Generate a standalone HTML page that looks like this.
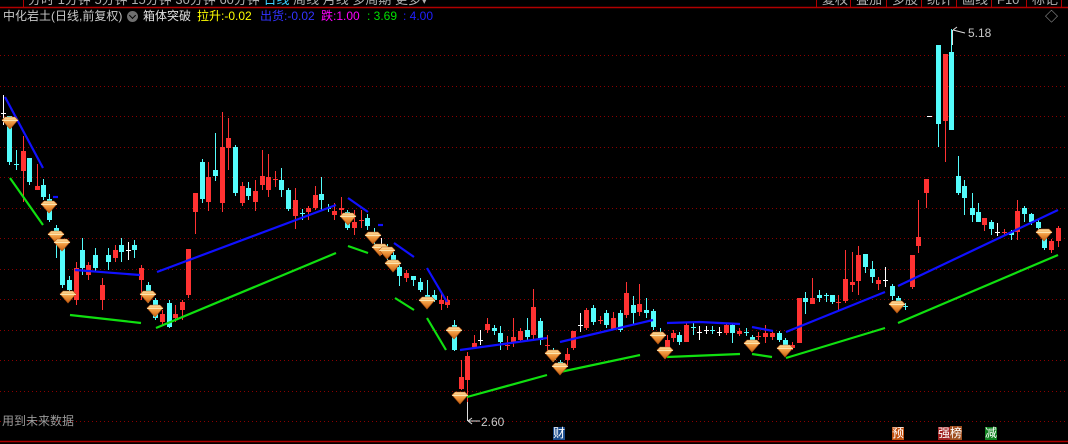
<!DOCTYPE html>
<html><head><meta charset="utf-8">
<style>
html,body{margin:0;padding:0;background:#000;overflow:hidden}
#w{position:relative;width:1068px;height:444px;background:#000;font-family:"Liberation Sans","Noto Sans CJK SC",sans-serif}
.t{position:absolute;white-space:nowrap;font-size:12px;line-height:14px}
</style></head><body><div id="w">
<svg id="s" width="1068" height="444" style="position:absolute;left:0;top:0"></svg>
<div class="t" style="left:3px;top:9px;color:#c8c8c8">中化岩土(日线,前复权)</div>
<div style="position:absolute;left:127px;top:11px;width:11px;height:11px;border-radius:50%;background:#707070"></div>
<div style="position:absolute;left:130px;top:13px;width:4px;height:4px;border-right:1.5px solid #000;border-bottom:1.5px solid #000;transform:rotate(45deg)"></div>
<div class="t" style="left:143px;top:9px;color:#e0e0e0">箱体突破</div>
<div class="t" style="left:197px;top:9px;color:#ffff00">拉升:-0.02</div>
<div class="t" style="left:260px;top:9px;color:#3333ff">出货:-0.02</div>
<div class="t" style="left:321px;top:9px;color:#ff00ff">跌:1.00</div>
<div class="t" style="left:367px;top:9px;color:#00e000">: 3.69</div>
<div class="t" style="left:403px;top:9px;color:#2020ff">: 4.00</div>
<div class="t" style="left:2px;top:414px;color:#9a9a9a;font-size:12px">用到未来数据</div>
<div class="t" style="left:481px;top:415px;color:#c8c8c8">2.60</div>
<div class="t" style="left:968px;top:26px;color:#c8c8c8">5.18</div>
<div class="t" style="left:553px;top:427px;color:#fff;background:#1a4a8a;font-size:12px;line-height:13px">财</div>
<div class="t" style="left:892px;top:427px;color:#fff;background:#c05010;font-size:12px;line-height:13px">预</div>
<div class="t" style="left:938px;top:427px;color:#fff;background:#a02020;font-size:12px;line-height:13px">强<span style="background:#a05020">榜</span></div>
<div class="t" style="left:985px;top:427px;color:#fff;background:#108020;font-size:12px;line-height:13px">减</div>
<div class="t" style="left:1045px;top:10px;color:#aaa;font-size:13px">◇</div>
</div>
<script>
var s=document.getElementById('s'),h='';
function L(x1,y1,x2,y2,c,w,d){h+='<line x1="'+x1+'" y1="'+y1+'" x2="'+x2+'" y2="'+y2+'" stroke="'+c+'" stroke-width="'+(w||1)+'"'+(d?' stroke-dasharray="'+d+'"':'')+'/>';}
function R(x,y,w,hh,c){h+='<rect x="'+x+'" y="'+y+'" width="'+w+'" height="'+hh+'" fill="'+c+'"/>';}
// top menu strip
R(0,0,1068,7,'#000');L(0,7.5,1068,7.5,'#b00000',1.5);L(23.5,0,23.5,7,'#b00000');
h+='<text x="28" y="4" fill="#b0b0b0" font-size="13" font-family="Liberation Sans,Noto Sans CJK SC,sans-serif">分时  1分钟  5分钟  15分钟  30分钟  60分钟  <tspan fill="#40d0ff">日线</tspan>  周线  月线  多周期  更多▾</text>';
var rx=[816,850,886,921,956,991,1026,1061];
for(var i=0;i<rx.length;i++){L(rx[i]+.5,0,rx[i]+.5,7,'#b00000');}
var rl=['复权','叠加','多股','统计','画线','F10','标记'];
for(i=0;i<rl.length;i++)h+='<text x="'+(rx[i]+6)+'" y="4" fill="#b0b0b0" font-size="13" font-family="Liberation Sans,Noto Sans CJK SC,sans-serif">'+rl[i]+'</text>';
// grid
for(var k=0;k<13;k++){var y=Math.round(55+30.5*k)+.5;L(0,y,1068,y,'#8a0000',1,'1 3');}
L(0,441.5,1068,441.5,'#b00000',1.5);
// candles: x,bt,bb,wt,wb,c
var C={c:'#54fcfc',r:'#ff3232',w:'#ffffff'};
var d=`3,113,113,95,125,w;9,116,162,116,165,c;16,164,164,150,170,c;23,151,171,136,202,r;29,158,182,158,185,c;37,186,190,164,190,r;43,185,197,179,200,c;49,199,220,194,222,c;56,228,240,225,258,c;62,242,285,240,288,c;69,280,290,276,294,c;76,268,300,262,305,r;82,250,268,238,275,c;88,265,275,262,280,r;95,255,268,248,272,c;102,285,300,278,310,r;108,255,262,248,270,c;115,250,258,245,262,r;121,245,252,238,262,c;128,250,250,242,260,w;134,245,250,240,258,c;141,268,280,265,300,r;148,285,300,282,303,c;155,300,318,298,320,c;162,314,322,310,325,r;169,303,327,300,328,c;175,314,318,305,322,r;182,302,310,300,320,r;188,249,295,249,298,r;195,193,212,193,234,r;202,162,199,159,203,c;208,177,202,162,211,r;215,170,176,133,181,c;222,147,203,112,212,r;228,138,148,118,170,r;235,147,193,145,196,c;242,186,203,182,206,r;248,188,196,182,200,c;255,191,202,180,211,r;262,176,185,150,190,r;268,177,190,154,197,r;275,179,179,171,187,r;281,180,190,168,197,c;288,190,209,188,211,c;295,200,216,188,229,r;302,213,213,209,220,c;308,208,212,206,220,r;315,195,208,186,210,r;321,194,200,177,210,c;328,208,208,204,212,c;334,211,215,203,220,r;341,208,210,197,218,r;347,212,228,210,230,c;354,222,228,210,235,r;361,220,220,210,228,r;367,218,226,214,230,c;374,232,240,228,245,c;381,245,250,238,255,w;387,248,256,244,260,c;393,255,262,250,268,c;399,267,276,265,286,c;406,273,278,270,282,r;413,276,280,276,286,c;420,282,290,278,292,c;427,295,300,280,305,c;434,295,300,290,302,c;441,300,304,293,310,r;447,300,305,296,308,r;454,325,350,320,351,c;461,377,389,360,390,r;467,356,380,352,421,r;474,343,347,335,349,r;480,340,340,330,345,w;487,324,330,318,333,r;494,328,331,325,335,c;500,333,342,326,350,c;507,345,345,336,350,r;513,337,343,318,347,r;520,331,340,328,342,r;527,330,337,318,340,c;533,307,335,289,340,r;540,321,340,318,345,c;547,345,345,335,352,r;553,350,360,348,362,c;560,362,366,360,370,c;567,354,360,348,365,r;573,331,348,331,350,r;580,325,325,313,332,w;586,310,328,308,330,r;593,308,322,305,325,c;600,320,320,316,324,r;606,313,325,310,328,c;613,318,329,312,330,r;620,313,330,310,332,c;626,293,315,282,318,r;633,305,313,296,325,c;639,304,312,284,316,r;646,310,313,298,318,c;653,311,327,309,330,c;660,332,336,328,340,c;667,340,347,335,352,r;673,333,338,330,342,r;679,335,342,332,345,c;686,325,342,322,342,r;693,327,327,322,335,c;699,332,332,326,340,w;706,330,330,326,334,w;712,330,330,326,334,c;719,332,332,327,336,w;726,325,333,323,335,r;732,325,333,323,343,c;739,331,334,328,336,r;746,332,332,328,336,c;752,337,340,335,343,c;758,336,336,332,340,r;765,333,337,325,343,r;772,333,337,330,340,r;779,333,340,331,342,c;785,340,345,338,348,c;792,345,348,342,350,r;799,298,343,298,343,r;805,298,302,292,314,c;812,298,304,278,304,r;819,295,298,290,302,c;826,295,295,293,302,c;832,295,302,295,304,c;838,302,302,295,310,r;845,279,301,250,303,r;852,282,285,252,292,r;858,255,281,246,295,r;865,254,267,254,273,c;872,269,277,261,283,c;878,280,284,277,290,r;885,280,280,267,287,w;892,286,296,284,300,c;898,298,302,296,305,c;905,306,306,303,310,c;912,255,287,255,289,r;918,237,246,200,253,r;926,179,193,179,208,r;929,116,116,116,116,w;938,45,124,45,147,c;945,54,121,54,162,r;951,52,130,29,130,c;958,176,193,156,195,c;964,186,198,180,215,c;972,208,215,193,222,c;978,212,222,203,222,c;984,218,225,218,231,r;991,222,229,220,235,c;997,232,232,223,236,w;1004,232,232,229,236,r;1011,232,235,230,240,c;1017,211,232,200,240,r;1024,208,214,206,222,c;1031,214,222,213,225,c;1038,222,228,220,230,c;1044,237,248,235,250,c;1051,241,250,239,253,r;1058,228,241,226,247,r`;
d.split(';').forEach(function(e){var a=e.split(','),x=+a[0],c=C[a[5]];
 L(x+.5,+a[3],x+.5,+a[4],c);
 var t=+a[1],b=+a[2];
 if(b-t<1){R(x-2,t,5,1,c);}else R(x-2,t,5,b-t,c);
});
// lines
function P(pts,c){h+='<polyline points="'+pts+'" fill="none" stroke="'+c+'" stroke-width="2.2"/>';}
var B='#1010ff',G='#10e010';
P('5,97 43,168',B);P('53,197 58,197',B);P('75,270 140,275',B);P('157,272 336,205',B);P('348,198 368,212',B);P('378,225 383,225',B);
P('394,243 414,257',B);P('427,268 447,302',B);P('460,350 547,338',B);P('560,342 653,320',B);P('667,323 700,322 740,324',B);
P('752,327 773,331',B);P('786,332 885,292',B);P('898,286 1058,210',B);
P('10,178 43,225',G);P('70,315 141,323',G);P('156,328 336,253',G);P('348,246 368,253',G);P('395,298 414,310',G);P('427,318 446,350',G);
P('467,397 547,375',G);P('560,372 640,355',G);P('667,357 740,354',G);P('752,354 772,357',G);P('786,358 885,328',G);P('898,323 1058,255',G);
// arrows
L(467.5,402,467.5,421,'#ddd');L(468,421,480,421,'#ddd');L(468,421,472,418,'#ddd');L(468,421,472,424,'#ddd');
L(952.5,30,952.5,45,'#ddd');L(953,30,965,33,'#ddd');L(953,30,957,27,'#ddd');
// diamonds
h+='<defs><linearGradient id="g" x1="0" y1="0" x2="0" y2="1"><stop offset="0" stop-color="#ffe0a0"/><stop offset=".45" stop-color="#f09a40"/><stop offset="1" stop-color="#c86010"/></linearGradient></defs>';
var D=[[10,122],[49,206],[56,236],[62,244],[68,296],[148,296],[155,310],[348,218],[373,237],[380,249],[387,252],[393,265],[427,302],[454,332],[460,397],[553,355],[560,368],[658,337],[665,352],[752,345],[785,350],[897,306],[1044,234]];
D.forEach(function(p){var x=p[0],y=p[1];
 h+='<polygon points="'+(x-8)+','+(y-2)+' '+(x-5)+','+(y-5)+' '+(x+5)+','+(y-5)+' '+(x+8)+','+(y-2)+' '+x+','+(y+7)+'" fill="url(#g)" stroke="#b05010" stroke-width=".6"/>';
 L(x-8,y-1.5,x+8,y-1.5,'#fff0c0',.8);});
s.innerHTML=h;
</script>
</body></html>
